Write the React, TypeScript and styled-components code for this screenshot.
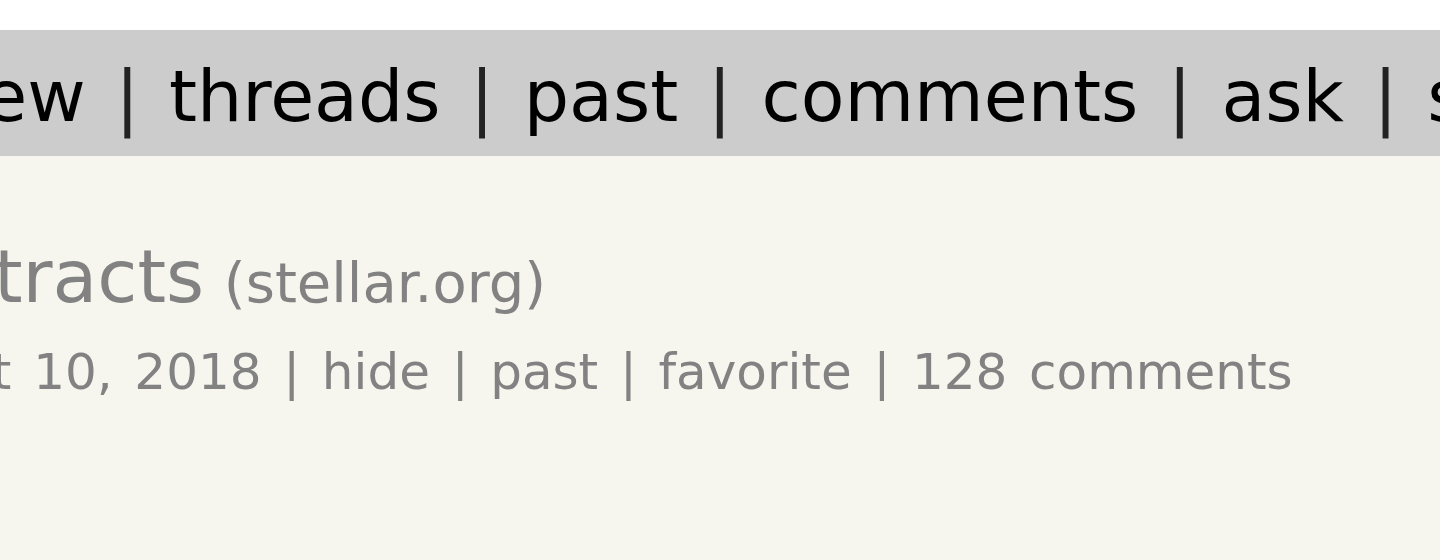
import React from "react";
import styled, { createGlobalStyle } from "styled-components";

const GlobalStyle = createGlobalStyle`
  html, body {
    margin: 0;
    padding: 0;
    background: #ffffff;
  }
  body {
    font-family: "DejaVu Sans", Verdana, sans-serif;
  }
`;

const Page = styled.div`
  width: 1440px;
  height: 560px;
  display: flex;
  flex-direction: column;
  overflow: hidden;
  background: #ffffff;
  padding-top: 30px;
  box-sizing: border-box;
`;

const TopBar = styled.div`
  height: 126px;
  box-sizing: border-box;
  padding-top: 31px;
  background: #cccccc;
  flex-shrink: 0;
`;

const PageTop = styled.div<{ $shift: number }>`
  margin-left: ${(p) => p.$shift}px;
  font-size: 71.5px;
  line-height: 71.5px;
  word-spacing: 6.8px;
  color: #222222;
  white-space: nowrap;
`;

const NavLink = styled.a`
  color: #000000;
  text-decoration: none;
`;

const Main = styled.div`
  flex: 1;
  background: #f6f6ef;
  padding-top: 84px;
`;

const TitleLine = styled.div<{ $shift: number }>`
  margin-left: ${(p) => p.$shift}px;
  font-size: 73px;
  line-height: 73px;
  color: #828282;
  white-space: nowrap;
`;

const SiteBit = styled.span`
  font-size: 56px;
  line-height: 1;
  word-spacing: 2px;
  color: #828282;
`;

const SubText = styled.div<{ $shift: number }>`
  margin-top: 34px;
  margin-left: ${(p) => p.$shift}px;
  font-size: 50px;
  line-height: 50px;
  word-spacing: 5.8px;
  color: #828282;
  white-space: nowrap;
`;

const navItems = ["new", "threads", "past", "comments", "ask", "show", "jobs", "submit"];
const subItems = ["hide", "past", "favorite", "128 comments"];

export default function App() {
  return (
    <>
      <GlobalStyle />
      <Page>
        <TopBar>
          <PageTop $shift={-62}>
            {navItems.map((item, i) => (
              <React.Fragment key={item}>
                {i > 0 && " | "}
                <NavLink>{item}</NavLink>
              </React.Fragment>
            ))}
          </PageTop>
        </TopBar>
        <Main>
          <TitleLine $shift={-148}>
            Contracts
            <SiteBit> (stellar.org)</SiteBit>
          </TitleLine>
          <SubText $shift={-75}>
            Oct 10, 2018
            {subItems.map((item) => (
              <React.Fragment key={item}>
                {" | "}
                {item}
              </React.Fragment>
            ))}
          </SubText>
        </Main>
      </Page>
    </>
  );
}
